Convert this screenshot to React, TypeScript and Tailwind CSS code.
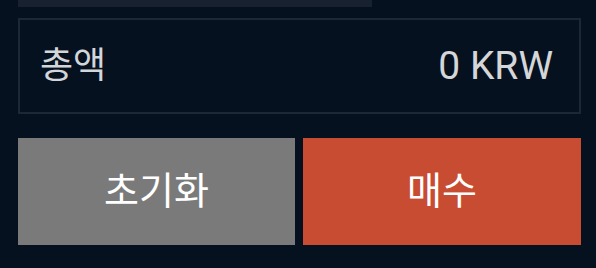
import React from 'react';

const font = "font-['Roboto','Noto_Sans_CJK_KR',sans-serif]";

export default function App() {
  return (
    <div className={`w-[596px] h-[268px] bg-[#061120] pl-[18px] pr-[15px] ${font}`}>
      <div className="w-[354px] h-[7px] bg-[#172130]" />
      <div className="mt-[11px] h-[96px] border-2 border-[#1d2837] flex items-center justify-between pl-[20px] pr-[26px]">
        <span className="text-[36px] text-[#d2d5d9] leading-none">총액</span>
        <span className="text-[39px] text-[#d4d6d8] leading-none">0 KRW</span>
      </div>
      <div className="mt-[24px] flex gap-[8px]">
        <button className="h-[107px] w-[277px] bg-[#7a7a7a] text-white text-[38px] font-normal">
          초기화
        </button>
        <button className="h-[107px] flex-1 bg-[#c84c32] text-white text-[38px] font-normal">
          매수
        </button>
      </div>
    </div>
  );
}
